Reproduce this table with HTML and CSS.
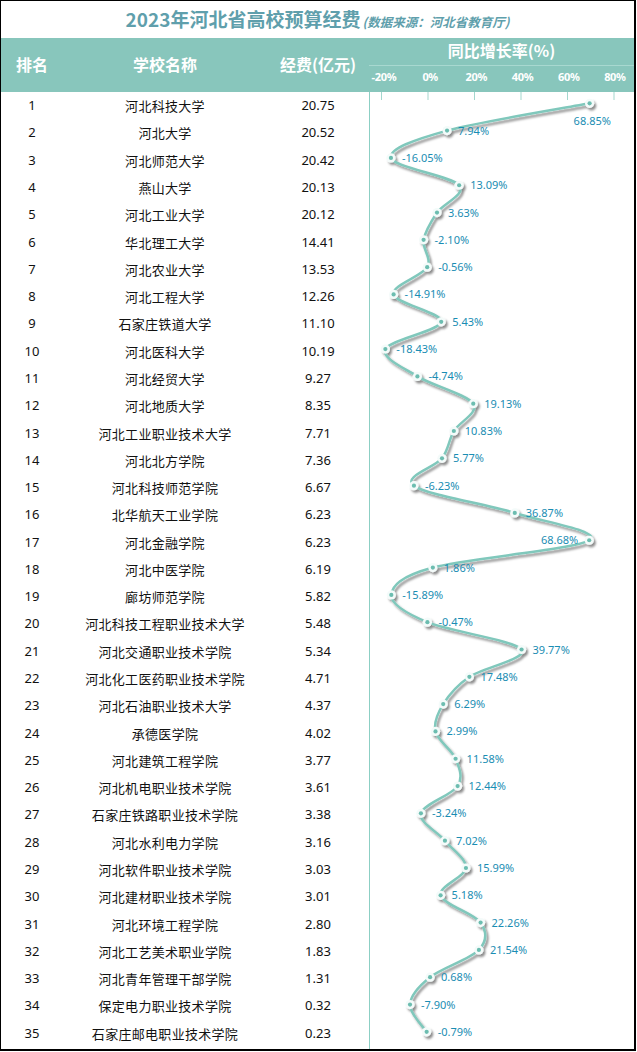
FILE: index.html
```html
<!DOCTYPE html>
<html lang="zh-CN">
<head>
<meta charset="utf-8">
<title>2023年河北省高校预算经费</title>
<link rel="stylesheet" href="styles.css">
</head>
<body>
<div class="frame">
  <div class="title"><span class="title-main">2023年河北省高校预算经费</span><span class="title-src">(数据来源：河北省教育厅)</span></div>
  <div class="head">
    <div class="h-rank">排名</div>
    <div class="h-name">学校名称</div>
    <div class="h-fund">经费(亿元)</div>
    <div class="h-chart">
      <div class="h-chart-title">同比增长率(%)</div>
      <div class="axis-labels"><span>-20%</span><span>0%</span><span>20%</span><span>40%</span><span>60%</span><span>80%</span></div>
    </div>
  </div>
  <div class="body">
    <div class="rows">
      <div class="row"><span class="c-rank">1</span><span class="c-name">河北科技大学</span><span class="c-fund">20.75</span></div>
      <div class="row"><span class="c-rank">2</span><span class="c-name">河北大学</span><span class="c-fund">20.52</span></div>
      <div class="row"><span class="c-rank">3</span><span class="c-name">河北师范大学</span><span class="c-fund">20.42</span></div>
      <div class="row"><span class="c-rank">4</span><span class="c-name">燕山大学</span><span class="c-fund">20.13</span></div>
      <div class="row"><span class="c-rank">5</span><span class="c-name">河北工业大学</span><span class="c-fund">20.12</span></div>
      <div class="row"><span class="c-rank">6</span><span class="c-name">华北理工大学</span><span class="c-fund">14.41</span></div>
      <div class="row"><span class="c-rank">7</span><span class="c-name">河北农业大学</span><span class="c-fund">13.53</span></div>
      <div class="row"><span class="c-rank">8</span><span class="c-name">河北工程大学</span><span class="c-fund">12.26</span></div>
      <div class="row"><span class="c-rank">9</span><span class="c-name">石家庄铁道大学</span><span class="c-fund">11.10</span></div>
      <div class="row"><span class="c-rank">10</span><span class="c-name">河北医科大学</span><span class="c-fund">10.19</span></div>
      <div class="row"><span class="c-rank">11</span><span class="c-name">河北经贸大学</span><span class="c-fund">9.27</span></div>
      <div class="row"><span class="c-rank">12</span><span class="c-name">河北地质大学</span><span class="c-fund">8.35</span></div>
      <div class="row"><span class="c-rank">13</span><span class="c-name">河北工业职业技术大学</span><span class="c-fund">7.71</span></div>
      <div class="row"><span class="c-rank">14</span><span class="c-name">河北北方学院</span><span class="c-fund">7.36</span></div>
      <div class="row"><span class="c-rank">15</span><span class="c-name">河北科技师范学院</span><span class="c-fund">6.67</span></div>
      <div class="row"><span class="c-rank">16</span><span class="c-name">北华航天工业学院</span><span class="c-fund">6.23</span></div>
      <div class="row"><span class="c-rank">17</span><span class="c-name">河北金融学院</span><span class="c-fund">6.23</span></div>
      <div class="row"><span class="c-rank">18</span><span class="c-name">河北中医学院</span><span class="c-fund">6.19</span></div>
      <div class="row"><span class="c-rank">19</span><span class="c-name">廊坊师范学院</span><span class="c-fund">5.82</span></div>
      <div class="row"><span class="c-rank">20</span><span class="c-name">河北科技工程职业技术大学</span><span class="c-fund">5.48</span></div>
      <div class="row"><span class="c-rank">21</span><span class="c-name">河北交通职业技术学院</span><span class="c-fund">5.34</span></div>
      <div class="row"><span class="c-rank">22</span><span class="c-name">河北化工医药职业技术学院</span><span class="c-fund">4.71</span></div>
      <div class="row"><span class="c-rank">23</span><span class="c-name">河北石油职业技术大学</span><span class="c-fund">4.37</span></div>
      <div class="row"><span class="c-rank">24</span><span class="c-name">承德医学院</span><span class="c-fund">4.02</span></div>
      <div class="row"><span class="c-rank">25</span><span class="c-name">河北建筑工程学院</span><span class="c-fund">3.77</span></div>
      <div class="row"><span class="c-rank">26</span><span class="c-name">河北机电职业技术学院</span><span class="c-fund">3.61</span></div>
      <div class="row"><span class="c-rank">27</span><span class="c-name">石家庄铁路职业技术学院</span><span class="c-fund">3.38</span></div>
      <div class="row"><span class="c-rank">28</span><span class="c-name">河北水利电力学院</span><span class="c-fund">3.16</span></div>
      <div class="row"><span class="c-rank">29</span><span class="c-name">河北软件职业技术学院</span><span class="c-fund">3.03</span></div>
      <div class="row"><span class="c-rank">30</span><span class="c-name">河北建材职业技术学院</span><span class="c-fund">3.01</span></div>
      <div class="row"><span class="c-rank">31</span><span class="c-name">河北环境工程学院</span><span class="c-fund">2.80</span></div>
      <div class="row"><span class="c-rank">32</span><span class="c-name">河北工艺美术职业学院</span><span class="c-fund">1.83</span></div>
      <div class="row"><span class="c-rank">33</span><span class="c-name">河北青年管理干部学院</span><span class="c-fund">1.31</span></div>
      <div class="row"><span class="c-rank">34</span><span class="c-name">保定电力职业技术学院</span><span class="c-fund">0.32</span></div>
      <div class="row"><span class="c-rank">35</span><span class="c-name">石家庄邮电职业技术学院</span><span class="c-fund">0.23</span></div>
    </div>
    <div class="chart">
      <svg class="chart-svg" width="264" height="957" viewBox="0 0 264 957" xmlns="http://www.w3.org/2000/svg">
        <defs>
          <filter id="shadow" x="-20%" y="-20%" width="140%" height="140%">
            <feDropShadow dx="2" dy="2.5" stdDeviation="1.3" flood-color="#000" flood-opacity="0.45"/>
          </filter>
        </defs>
        <g class="ticks"></g>
        <g class="series" filter="url(#shadow)"></g>
        <g class="labels"></g>
      </svg>
    </div>
  </div>
</div>
<script src="script.js"></script>
</body>
</html>
```

FILE: styles.css
```css
body {
  margin: 0;
  background: #fff;
  font-family: "Noto Sans", "Noto Sans CJK SC", sans-serif;
}

.frame {
  width: 636px;
  height: 1051px;
  box-sizing: border-box;
  border: 1px solid #000;
  border-right-width: 2px;
  border-bottom-width: 2px;
  display: flex;
  flex-direction: column;
  background: #fff;
}

.title {
  height: 37px;
  line-height: 36px;
  text-align: center;
  color: #5f9fac;
  font-family: "Noto Sans CJK SC", sans-serif;
  font-weight: bold;
  white-space: nowrap;
}

.title-main {
  font-size: 19px;
}

.title-src {
  font-size: 12.5px;
  font-style: italic;
  margin-left: 2px;
}

.head {
  height: 54px;
  background: #88c6bc;
  display: flex;
  color: #fff;
  font-family: "Noto Sans CJK SC", sans-serif;
  font-weight: bold;
  font-size: 16px;
}

.h-rank,
.h-name,
.h-fund {
  display: flex;
  align-items: center;
  justify-content: center;
  padding-bottom: 2px;
}

.h-rank { width: 62px; }
.h-name { width: 204px; }
.h-fund { width: 102px; }

.h-chart {
  flex: 1;
  display: flex;
  flex-direction: column;
}

.h-chart-title {
  height: 27px;
  line-height: 24px;
  text-align: center;
  border-bottom: 1px solid #a8d8d0;
}

.axis-labels {
  flex: 1;
  display: flex;
  justify-content: space-between;
  align-items: center;
  padding-right: 4px;
  padding-bottom: 6px;
  font-family: "Noto Sans", sans-serif;
  font-size: 11px;
  letter-spacing: -0.3px;
}

.axis-labels span {
  width: 30px;
  text-align: center;
}

.body {
  flex: 1;
  display: flex;
}

.rows {
  width: 368px;
  display: flex;
  flex-direction: column;
  padding-bottom: 2px;
  box-sizing: border-box;
}

.row {
  flex: 1;
  display: flex;
  align-items: center;
  font-size: 13px;
  line-height: 1;
  color: #111;
}

.c-rank {
  width: 62px;
  text-align: center;
}

.c-name {
  width: 204px;
  text-align: center;
  font-family: "Noto Sans CJK SC", sans-serif;
  letter-spacing: 0.3px;
}

.c-fund {
  width: 102px;
  text-align: center;
}

.chart {
  flex: 1;
  border-left: 1px solid #8ccfc4;
}

.chart-svg {
  display: block;
}

.chart-svg .tick {
  stroke: #a3d7ce;
  stroke-width: 1;
}

.chart-svg .line {
  fill: none;
  stroke: #80c8bc;
  stroke-width: 2.5;
  stroke-linejoin: round;
}

.chart-svg .dot-outer {
  fill: #f4fbfa;
}

.chart-svg .dot-inner {
  fill: #6cbdb0;
}

.chart-svg .label {
  fill: #1a8db3;
  font-family: "Noto Sans", sans-serif;
  font-size: 11px;
}
```

FILE: script.js
```js
(function () {
  var data = [68.85, 7.94, -16.05, 13.09, 3.63, -2.10, -0.56, -14.91, 5.43, -18.43,
    -4.74, 19.13, 10.83, 5.77, -6.23, 36.87, 68.68, 1.86, -15.89, -0.47,
    39.77, 17.48, 6.29, 2.99, 11.58, 12.44, -3.24, 7.02, 15.99, 5.18,
    22.26, 21.54, 0.68, -7.90, -0.79];
  var NS = "http://www.w3.org/2000/svg";
  var svg = document.querySelector(".chart-svg");
  var ticks = svg.querySelector(".ticks");
  var series = svg.querySelector(".series");
  var labels = svg.querySelector(".labels");

  function el(name, attrs, parent) {
    var e = document.createElementNS(NS, name);
    for (var k in attrs) e.setAttribute(k, attrs[k]);
    parent.appendChild(e);
    return e;
  }

  for (var t = 0; t < 6; t++) {
    var tx = 11.5 + 46.5 * t;
    el("line", { x1: tx, y1: 0, x2: tx, y2: 8, "class": "tick" }, ticks);
  }

  var pts = data.map(function (v, i) {
    return { x: 58.5 + 2.34 * v, y: 11.3 + 27.31 * i };
  });

  var d = "M" + pts[0].x.toFixed(2) + " " + pts[0].y.toFixed(2);
  for (var i = 0; i < pts.length - 1; i++) {
    var p0 = pts[i - 1] || pts[i];
    var p1 = pts[i];
    var p2 = pts[i + 1];
    var p3 = pts[i + 2] || p2;
    var c1x = p1.x + (p2.x - p0.x) / 6, c1y = p1.y + (p2.y - p0.y) / 6;
    var c2x = p2.x - (p3.x - p1.x) / 6, c2y = p2.y - (p3.y - p1.y) / 6;
    d += " C" + c1x.toFixed(2) + " " + c1y.toFixed(2) + " " +
      c2x.toFixed(2) + " " + c2y.toFixed(2) + " " +
      p2.x.toFixed(2) + " " + p2.y.toFixed(2);
  }
  el("path", { d: d, "class": "line" }, series);

  pts.forEach(function (p, i) {
    el("circle", { cx: p.x, cy: p.y, r: 4.6, "class": "dot-outer" }, series);
    el("circle", { cx: p.x, cy: p.y, r: 2.1, "class": "dot-inner" }, series);

    var txt = data[i].toFixed(2) + "%";
    var attrs = { x: p.x + 11, y: p.y + 4, "class": "label" };
    if (i === 0) {
      attrs.x = p.x - 16;
      attrs.y = p.y + 22;
    } else if (i === 16) {
      attrs.x = p.x - 11;
      attrs["text-anchor"] = "end";
    }
    var tEl = el("text", attrs, labels);
    tEl.textContent = txt;
  });
})();
```
